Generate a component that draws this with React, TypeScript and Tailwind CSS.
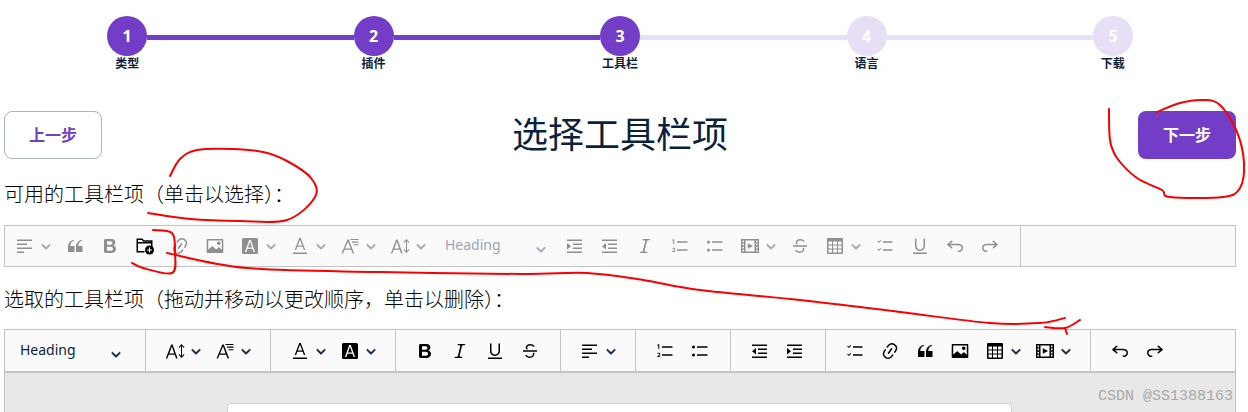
import React from "react";

const FONT = "[font-family:'Noto_Sans','Noto_Sans_CJK_SC',sans-serif]";

const icons: Record<string, React.ReactNode> = {
  align: <path d="M2 3.5h15V5H2zM2 7.5h10V9H2zM2 11.5h15V13H2zM2 15.5h7V17H2z" />,
  quote: <path d="M3 10.423a6.5 6.5 0 0 1 6.056-6.408l.038.67C6.448 5.423 5.354 7.663 5.22 10H9c.552 0 .5.432.5.986v4.511c0 .554-.448.503-1 .503h-5c-.552 0-.5-.449-.5-1.003v-4.574zm8 0a6.5 6.5 0 0 1 6.056-6.408l.038.67c-2.646.739-3.74 2.979-3.873 5.315H17c.552 0 .5.432.5.986v4.511c0 .554-.448.503-1 .503h-5c-.552 0-.5-.449-.5-1.003v-4.574z" />,
  bold: <path d="M10.187 17H5.773c-.637 0-1.092-.138-1.364-.415-.273-.277-.409-.718-.409-1.323V4.738c0-.617.14-1.062.419-1.332.279-.27.73-.406 1.354-.406h4.68c.69 0 1.288.041 1.793.124.506.083.96.242 1.36.478.341.197.644.447.906.75a3.262 3.262 0 0 1 .808 2.162c0 1.401-.722 2.426-2.167 3.075C15.05 10.175 16 11.315 16 13.01a3.756 3.756 0 0 1-2.296 3.504 6.1 6.1 0 0 1-1.517.377c-.571.073-1.238.11-2 .11zm-.217-6.217H7v4.087h3.069c1.977 0 2.965-.69 2.965-2.072 0-.707-.256-1.22-.768-1.537-.512-.319-1.277-.478-2.296-.478zM7 5.13v3.619h2.606c.729 0 1.292-.067 1.69-.2a1.6 1.6 0 0 0 .91-.765c.165-.267.247-.566.247-.897 0-.707-.26-1.176-.778-1.409-.519-.232-1.31-.348-2.375-.348H7z" />,
  italic: <path d="m9.586 14.633.021.004c-.036.335.095.655.393.962.082.083.173.15.274.201h1.474a.6.6 0 1 1 0 1.2H5.304a.6.6 0 0 1 0-1.2h1.15c.474-.07.809-.182 1.005-.334.157-.122.291-.32.404-.597l2.416-9.55a1.053 1.053 0 0 0-.281-.823 1.12 1.12 0 0 0-.442-.296H8.15a.6.6 0 0 1 0-1.2h6.443a.6.6 0 1 1 0 1.2h-1.195c-.376.056-.65.155-.823.296-.215.175-.423.439-.623.79l-2.366 9.347z" />,
  underline: <path d="M3 18v-1.5h14V18zM5 2.5h1.5v7.6c0 2.2 1.4 3.4 3.5 3.4s3.5-1.2 3.5-3.4V2.5H15v7.6c0 3-2.1 4.9-5 4.9s-5-1.9-5-4.9z" />,
  strike: <path d="M3 9.25h14v1.5H3zM6.2 8.3C5.9 7.8 5.7 7.3 5.7 6.6c0-2.1 1.9-3.6 4.4-3.6 2 0 3.6.8 4.5 2.1l-1.2.9c-.7-1-1.8-1.5-3.3-1.5-1.7 0-2.9.9-2.9 2.1 0 .7.3 1.2.9 1.7zM14.2 11.5c.1.3.2.7.2 1.1 0 2.5-1.9 4.4-4.5 4.4-2 0-3.8-.9-4.7-2.4l1.2-.9c.7 1.1 2 1.9 3.5 1.9 1.8 0 3-1.2 3-2.9 0-.3 0-.5-.1-.7z" />,
  link: <path d="m11.077 15 .991-1.416a.75.75 0 1 1 1.229.86l-1.148 1.64a.748.748 0 0 1-.217.206 5.251 5.251 0 0 1-8.503-5.955.741.741 0 0 1 .12-.274l1.147-1.639a.75.75 0 1 1 1.228.86L4.933 10.7l.006.003a3.75 3.75 0 0 0 6.132 4.294l.006.004zm5.494-5.335a.748.748 0 0 1-.12.274l-1.147 1.639a.75.75 0 1 1-1.228-.86l.86-1.23a3.75 3.75 0 0 0-6.144-4.301l-.86 1.229a.75.75 0 0 1-1.229-.86l1.148-1.64a.748.748 0 0 1 .217-.206 5.251 5.251 0 0 1 8.503 5.955zm-4.563-2.532a.75.75 0 0 1 .184 1.045l-3.155 4.505a.75.75 0 1 1-1.229-.86l3.155-4.506a.75.75 0 0 1 1.045-.184z" />,
  image: <path fillRule="evenodd" d="M2.8 3h14.4c.6 0 1.1.5 1.1 1.1v11.8c0 .6-.5 1.1-1.1 1.1H2.8c-.6 0-1.1-.5-1.1-1.1V4.1C1.7 3.500 2.200 3 2.800 3zm.4 1.500v9.100l3.700-3.100c.3-.2.600-.2.900 0l3.300 2.900 2.300-2c.3-.2.600-.2.900 0l2.500 2.300V4.500zM13.700 5.500a1.800 1.800 0 1 1 0 3.600 1.800 1.800 0 0 1 0-3.600z" />,
  fontBg: <path fillRule="evenodd" d="M3.500 2h13A1.500 1.500 0 0 1 18 3.500v13a1.500 1.500 0 0 1-1.500 1.500h-13A1.500 1.500 0 0 1 2 16.500v-13A1.500 1.500 0 0 1 3.500 2zM9.200 4 4.900 16h1.500l1.100-3.200h5l1.100 3.200h1.500L10.800 4zM10 5.800l2 5.700H8z" />,
  fontColor: <path d="M9.200 2 4.700 14h1.500l1.100-3.200h5.400l1.100 3.200h1.500L10.800 2zM10 3.800l2.200 5.700H7.800zM3 16.500h14V18H3z" />,
  fontFamily: <path d="M7.400 3.500 1.500 17.500H3l1.500-3.700h6.600l1.500 3.700h1.500L8.800 3.500zm.7 1.900 2.500 7.100H5zM10.500 3h8v1.100h-8zM12 5.600h6.500v1.100H12zM13.500 8.200h5v1.100h-5z" />,
  fontSize: <path d="M6.200 3.500.8 17.500h1.500l1.400-3.700h6l1.400 3.700h1.500L7.600 3.500zm.7 1.900 2.300 7.100H4.300zM16 5.100l-1.700 1.800-.8-.7 3-3.300 3 3.300-.8.700-1.700-1.800v9.800l1.700-1.800.8.700-3 3.300-3-3.300.8-.7 1.700 1.800z" />,
  indent: <path d="M2 3.500h15V5H2zM8 7.500h9V9H8zM8 11.500h9V13H8zM2 15.500h15V17H2zM2 7l4 3.200-4 3.200z" />,
  outdent: <path d="M2 3.500h15V5H2zM8 7.500h9V9H8zM8 11.500h9V13H8zM2 15.500h15V17H2zM6 7l-4 3.200 4 3.200z" />,
  numbered: <path d="M7 5.250h10.500v1.500H7zM7 13.250h10.500v1.500H7zM3.300 3.200h1v4.800h-1V4.400l-.9.400V3.800zM2.300 12.700c.2-.7.800-1 1.500-1 .9 0 1.500.5 1.500 1.300 0 .6-.3 1-.9 1.500l-.8.700h1.800v.9H2.300v-.8l1.500-1.300c.4-.4.500-.6.500-.9 0-.3-.2-.5-.5-.5-.3 0-.5.200-.6.500z" />,
  bullet: <path d="M7 5.250h10.500v1.500H7zM7 13.250h10.500v1.500H7zM3.500 4.500a1.500 1.500 0 1 1 0 3 1.500 1.500 0 0 1 0-3zM3.500 12.500a1.500 1.500 0 1 1 0 3 1.500 1.500 0 0 1 0-3z" />,
  media: <path fillRule="evenodd" d="M1 3h18v14H1zM2.500 4.500v1.700h1.500V4.500zm0 3.100v1.700h1.500V7.600zm0 3.100v1.700h1.500v-1.700zm0 3.100v1.700h1.500v-1.700zM16 4.500v1.700h1.500V4.500zm0 3.100v1.700h1.500V7.600zm0 3.100v1.700h1.500v-1.700zm0 3.100v1.700h1.500v-1.700zM5.500 4.500v11h9v-11zm2.300 2.800 5.200 2.700-5.200 2.700z" />,
  table: <path fillRule="evenodd" d="M3 2h14a1 1 0 0 1 1 1v14a1 1 0 0 1-1 1H3a1 1 0 0 1-1-1V3a1 1 0 0 1 1-1zm.500 3.500v3h3.500v-3zm4.500 0v3h4v-3zm5 0v3h3.500v-3zm-9.500 4v3h3.500v-3zm4.500 0v3h4v-3zm5 0v3h3.500v-3zm-9.500 4v3h3.500v-3zm4.500 0v3h4v-3zm5 0v3h3.500v-3z" />,
  todo: <path d="M8 5.250h9.500v1.500H8zM8 13.250h9.500v1.500H8zM2.200 5.500l.7-.7.9.900L5.500 4l.7.700L3.800 7.100zM2.200 13.500l.7-.7.9.900L5.500 12l.7.700-2.400 2.400z" />,
  undo: <path d="m5.042 9.367 2.189 1.837a.75.75 0 0 1-.965 1.149l-3.788-3.18a.747.747 0 0 1-.21-.284.75.75 0 0 1 .17-.945L6.230 4.762a.75.75 0 1 1 .964 1.150L4.863 7.866h8.917A.75.75 0 0 1 14 7.900a4 4 0 1 1-1.477 7.718l.344-1.489a2.500 2.500 0 1 0 1.094-4.730l.008-.032H5.042z" />,
  redo: <path d="m14.958 9.367-2.189 1.837a.75.75 0 0 0 .965 1.149l3.788-3.180a.747.747 0 0 0 .21-.284.75.75 0 0 0-.17-.945L13.770 4.762a.75.75 0 1 0-.964 1.150l2.331 1.955H6.220A.75.75 0 0 0 6 7.900a4 4 0 1 0 1.477 7.718l-.344-1.489A2.500 2.500 0 1 1 6.039 9.400l-.008-.032h8.927z" />,
  folder: (
    <>
      <path fillRule="evenodd" d="M1.500 2.500h6L9 4.300h8.500v7h-1.500V7.500H3V15h6.500v1.500h-8zM3 4v2h12.500V5.800H8.300L6.800 4z" />
      <circle cx="14.500" cy="14" r="4.500" />
      <path fill="#fff" d="M14 11.500h1v2h2v1h-2v2h-1v-2h-2v-1h2z" />
    </>
  ),
};

const Icon = ({ name }: { name: string }) => (
  <svg viewBox="0 0 20 20" fill="currentColor" className={`h-5 w-5 shrink-0 ${name === "folder" ? "text-black" : ""}`}>
    {icons[name]}
  </svg>
);

const Chevron = () => (
  <svg viewBox="0 0 10 10" fill="currentColor" stroke="currentColor" strokeWidth=".5" className="h-[10px] w-[10px] shrink-0">
    <path d="M.941 4.523a.75.75 0 1 1 1.06-1.060l3.006 3.005 3.005-3.005a.75.75 0 1 1 1.060 1.060l-3.549 3.550a.75.75 0 0 1-1.168-.136L.941 4.523z" />
  </svg>
);

const Btn = ({ icon }: { icon: string }) => (
  <div className="flex w-[35px] shrink-0 items-center justify-center">
    <Icon name={icon} />
  </div>
);

const Drop = ({ icon, chevron }: { icon: string; chevron: string }) => (
  <div className="flex w-[50px] shrink-0 items-center gap-[6px] pl-[7.5px]">
    <Icon name={icon} />
    <span className={chevron}>
      <Chevron />
    </span>
  </div>
);

const HeadingDrop = ({ text, chevron }: { text: string; chevron: string }) => (
  <div className={`flex w-[125px] shrink-0 items-center justify-between pl-[12.5px] pr-[11.5px] text-sm ${text}`}>
    <span className="-translate-y-px">Heading</span>
    <span className={`translate-y-[3px] ${chevron}`}>
      <Chevron />
    </span>
  </div>
);

const Sep = () => <div className="mx-3 h-[41px] w-px shrink-0 self-start bg-[#c4c4c4]" />;

// one entry per toolbar item: icon name, "name+" for a dropdown, "|" for a separator
const renderItems = (items: string[], text: string, chevron: string) =>
  items.map((item, i) => {
    if (item === "|") return <Sep key={i} />;
    if (item === "heading") return <HeadingDrop key={i} text={text} chevron={chevron} />;
    if (item.endsWith("+")) return <Drop key={i} icon={item.slice(0, -1)} chevron={chevron} />;
    return <Btn key={i} icon={item} />;
  });

const available = [
  "align+", "quote", "bold", "folder", "link", "image", "fontBg+", "fontColor+", "fontFamily+", "fontSize+",
  "heading", "indent", "outdent", "italic", "numbered", "bullet", "media+", "strike", "table+", "todo",
  "underline", "undo", "redo",
];

const selected = [
  "heading", "|", "fontSize+", "fontFamily+", "|", "fontColor+", "fontBg+", "|", "bold", "italic", "underline",
  "strike", "|", "align+", "|", "numbered", "bullet", "|", "outdent", "indent", "|", "todo", "link", "quote",
  "image", "table+", "media+", "|", "undo", "redo",
];

const steps = [
  { n: 1, label: "类型" },
  { n: 2, label: "插件" },
  { n: 3, label: "工具栏" },
  { n: 4, label: "语言" },
  { n: 5, label: "下载" },
];

const Stepper = () => (
  <div>
    <div className="flex items-center px-[107px] pt-4">
      {steps.map((s, i) => (
        <React.Fragment key={s.n}>
          {i > 0 && <div className={`mt-[3px] h-[5px] flex-1 ${i < 3 ? "bg-[#733dc8]" : "bg-[#e6dff5]"}`} />}
          <div
            className={`flex h-10 w-10 shrink-0 items-center justify-center rounded-full text-base font-bold text-white ${
              i < 3 ? "bg-[#733dc8]" : "bg-[#e6dff5]"
            }`}
          >
            {s.n}
          </div>
        </React.Fragment>
      ))}
    </div>
    <div className="grid grid-cols-5 px-1 pt-px">
      {steps.map((s) => (
        <div key={s.n} className="text-center text-xs font-bold leading-[14px] text-[#0b1f3f]">
          {s.label}
        </div>
      ))}
    </div>
  </div>
);

// hand-drawn red marks on top of the screenshot
const smooth = (p: number[][]) => {
  let d = `M${p[0][0]} ${p[0][1]}`;
  for (let i = 0; i < p.length - 1; i++) {
    const a = p[Math.max(i - 1, 0)];
    const b = p[i];
    const c = p[i + 1];
    const e = p[Math.min(i + 2, p.length - 1)];
    d += ` C${b[0] + (c[0] - a[0]) / 6} ${b[1] + (c[1] - a[1]) / 6} ${c[0] - (e[0] - b[0]) / 6} ${c[1] - (e[1] - b[1]) / 6} ${c[0]} ${c[1]}`;
  }
  return d;
};

const marks = [
  [[170, 176], [180, 159], [197, 150], [233, 149], [263, 152], [287, 161], [311, 178], [315, 197], [287, 220], [240, 221], [190, 219], [148, 213]],
  [[1109, 109], [1110, 140], [1117, 158], [1137, 178], [1162, 190], [1170, 197], [1223, 197], [1240, 188], [1244, 163], [1237, 132], [1220, 105], [1203, 100], [1180, 103], [1157, 112]],
  [[153, 230], [172, 233], [175, 253], [172, 273], [143, 268], [132, 263]],
  [[167, 253], [247, 268], [380, 272], [520, 274], [587, 273], [643, 280], [700, 290], [800, 300], [900, 312], [990, 323], [1040, 323], [1065, 318]],
  [[1045, 327], [1065, 328], [1080, 320]],
  [[1065, 328], [1067, 334]],
];

const Marks = () => (
  <svg viewBox="0 0 1248 412" fill="none" className="pointer-events-none absolute inset-0 h-[412px] w-[1248px]">
    {marks.map((m, i) => (
      <path key={i} d={smooth(m)} stroke="#fa0000" strokeWidth="2" strokeLinecap="round" strokeLinejoin="round" />
    ))}
  </svg>
);

export default function App() {
  return (
    <div className={`relative h-[412px] w-[1248px] overflow-hidden bg-white text-[#0b1f3f] ${FONT}`}>
      <div className="w-[1240px]">
        <Stepper />

        <div className="mt-10 flex h-12 items-center justify-between px-1">
          <button className="h-12 w-[98px] rounded-lg border border-[#a9b5cc] text-base font-bold text-[#733dc8]">上一步</button>
          <h1 className="text-4xl">选择工具栏项</h1>
          <button className="h-12 w-[98px] rounded-lg bg-[#733dc8] text-base font-bold text-white">下一步</button>
        </div>

        <div className="px-1">
          <p className="mt-[22px] text-xl font-light leading-7 text-black">{"可用的工具栏项\uFF08单击以选择\uFF09\uFF1A"}</p>
          <div className="mt-4 flex h-[42px] border border-[#c4c4c4] bg-[#fafafa] pl-[2.5px]">
            <div className="flex text-[#8f8f8f]">{renderItems(available, "text-[#9da5b8]", "text-[#9da5b8]")}</div>
            <div className="ml-3 w-px bg-[#c4c4c4]" />
          </div>

          <p className="mt-[19px] text-xl font-light leading-7 text-black">{"选取的工具栏项\uFF08拖动并移动以更改顺序\uFF0C单击以删除\uFF09\uFF1A"}</p>
          <div className="mt-[15px] flex h-11 border border-b-2 border-[#c4c4c4] bg-[#fafafa] pl-[2.5px] text-black">
            {renderItems(selected, "text-[#0b1f3f]", "text-[#0b1f3f]")}
          </div>
          <div className="h-[60px] border-x border-[#c4c4c4] bg-[#e8e8e8] pt-[30px]">
            <div className="ml-[222px] h-20 w-[785px] rounded-t border border-[#d0d0d0] bg-white" />
          </div>
        </div>
      </div>

      <Marks />
      <div className="absolute bottom-[7px] right-[15px] font-['Liberation_Mono',monospace] text-[15px] leading-4 text-[#a8a8a8]">
        CSDN @SS1388163
      </div>
    </div>
  );
}
